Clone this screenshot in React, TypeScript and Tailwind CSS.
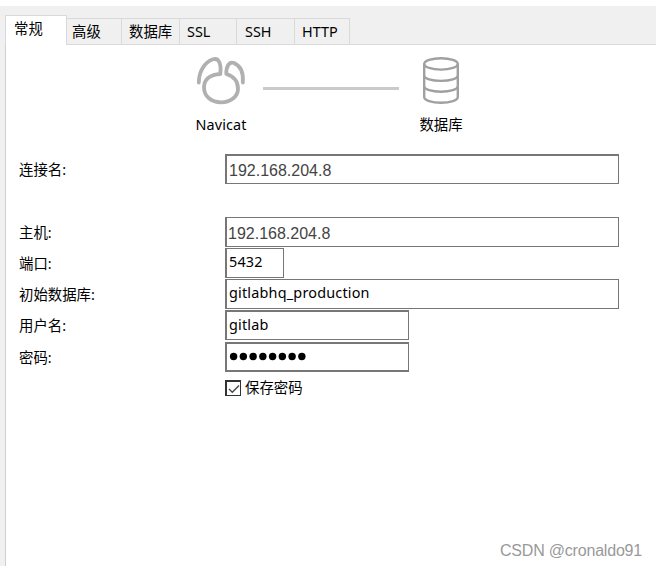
import React from "react";
import clsx from "clsx";

const tabs = [
  { label: "高级", className: "w-[55px] pl-[5px]" },
  { label: "数据库", className: "w-[58px] pl-[7px]" },
  { label: "SSL", className: "w-[57px] pl-[7px]" },
  { label: "SSH", className: "w-[58px] pl-[8px]" },
  { label: "HTTP", className: "w-[55px] pl-[7px]" },
];

const fields = [
  { label: "连接名:", value: "192.168.204.8", row: "mb-[33px]", box: "w-[394px] border-t-2", text: "font-['Liberation_Sans'] text-base text-[#444] pl-[2px] pt-[2px]" },
  { label: "主机:", value: "192.168.204.8", row: "mb-px", box: "w-[394px]", text: "font-['Liberation_Sans'] text-base text-[#444] pl-px pt-[3px]" },
  { label: "端口:", value: "5432", row: "mb-px", box: "w-[59px]", text: "tracking-[0.2px] pl-[2px]" },
  { label: "初始数据库:", value: "gitlabhq_production", row: "mb-px", box: "w-[394px]", text: "tracking-[0.2px] pl-[2px]" },
  { label: "用户名:", value: "gitlab", row: "mb-[2px]", box: "w-[184px] border-t-2", text: "tracking-[0.2px] pl-[2px]" },
];

function Row({ label, className, children }: { label: string; className?: string; children: React.ReactNode }) {
  return (
    <div className={clsx("flex h-[30px] pl-[13px]", className)}>
      <label className="w-[206px] shrink-0 leading-[31px]">{label}</label>
      {children}
    </div>
  );
}

function NavicatIcon() {
  return (
    <svg className="-ml-[2px] block shrink-0" width="56" height="54" viewBox="0 0 56 54" fill="none" stroke="#b0b0b0" strokeWidth="3.8" strokeLinecap="round" strokeLinejoin="round">
      <path d="M6.8 28.5C6.8 18 12 8.5 21 5.3C27 3.4 29.5 10 28.3 20C19 20.5 12 24.5 12 33.5C12 42.5 19.5 48.3 29 48.3S46 42.5 46 35C46 27 41 22 34.3 20C34 13 37 7 42 9C49 12 51.5 20 50.8 28.5" />
    </svg>
  );
}

function DatabaseIcon() {
  return (
    <svg className="block" width="50" height="54" viewBox="0 0 50 54" fill="none" stroke="#a0a0a0" strokeWidth="2.4">
      <ellipse cx="25" cy="9.9" rx="16.8" ry="5.7" />
      <path d="M8.2 10V43C8.2 46.2 15.7 48.7 25 48.7S41.8 46.2 41.8 43V10" />
      <path d="M8.2 21.5C8.2 24.6 15.7 26.9 25 26.9S41.8 24.6 41.8 21.5M8.2 32.3C8.2 35.4 15.7 37.7 25 37.7S41.8 35.4 41.8 32.3" />
    </svg>
  );
}

export default function App() {
  return (
    <div className="relative flex h-[566px] w-[656px] flex-col overflow-hidden bg-[#f0f0f0] pl-[5px] font-['Noto_Sans','Noto_Sans_CJK_SC',sans-serif] text-[14.4px] text-black">
      <div className="-ml-[5px] h-[6px] shrink-0 bg-white" />
      <nav className="flex h-[39px] shrink-0 items-end">
        <button className="h-[30px] w-[62px] border border-b-0 border-[#d9d9d9] bg-white pb-[3px] pl-[8px] text-left">常规</button>
        <div className="flex h-[27px] grow border-b border-[#d9d9d9]">
          {tabs.map((tab) => (
            <button key={tab.label} className={clsx("border-t border-r border-[#d9d9d9] text-left", tab.className)}>
              {tab.label}
            </button>
          ))}
        </div>
      </nav>

      <main className="grow border-l border-[#d0d0d0] bg-white">
        <div className="flex h-[109px] pt-[9px]">
          <div className="ml-[180px] flex w-[70px] flex-col items-center">
            <NavicatIcon />
            <span className="mt-[6px] leading-[22px] tracking-[0.1px]">Navicat</span>
          </div>
          <div className="mt-[33px] ml-[7px] h-[3px] w-[136px] bg-[#cacaca]" />
          <div className="ml-[12px] flex w-[60px] flex-col items-center">
            <DatabaseIcon />
            <span className="mt-[6px] leading-[22px]">数据库</span>
          </div>
        </div>

        {fields.map((field) => (
          <Row key={field.label} label={field.label} className={field.row}>
            <div className={clsx("border border-l-2 border-[#777] leading-[26px]", field.box, field.text)}>{field.value}</div>
          </Row>
        ))}
        <Row label="密码:">
          <div className="flex w-[184px] items-center border border-y-2 border-l-2 border-[#777] pl-[2px]">
            <svg width="80" height="12" viewBox="0 0 80 12">
              {Array.from({ length: 8 }, (_, i) => (
                <circle key={i} cx={4.6 + i * 9.75} cy="5.5" r="3.7" />
              ))}
            </svg>
          </div>
        </Row>

        <label className="mt-[5px] ml-[219px] flex h-[22px] items-center gap-[4px]">
          <span className="flex size-4 items-center justify-center border border-t-2 border-l-2 border-[#333]">
            <svg width="12" height="12" viewBox="0 0 12 12" fill="none" stroke="#444" strokeWidth="1.3">
              <path d="M1 6L4.3 9.3L11 2.5" />
            </svg>
          </span>
          保存密码
        </label>
      </main>

      <div className="absolute right-[14px] bottom-[5px] font-['Liberation_Sans'] text-base leading-5 tracking-[-0.2px] text-[#999]">CSDN @cronaldo91</div>
    </div>
  );
}
